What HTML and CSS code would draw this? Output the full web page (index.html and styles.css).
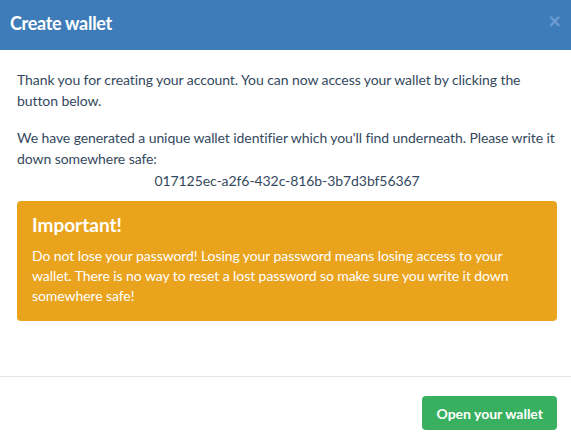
FILE: index.html
```html
<!DOCTYPE html>
<html lang="en">
<head>
    <meta charset="UTF-8">
    <meta name="viewport" content="width=device-width, initial-scale=1.0">
    <title>Create wallet</title>
    <link rel="stylesheet" href="styles.css">
</head>
<body>
    <div class="modal">
        <div class="modal-header">
            <h1>Create wallet</h1>
            <button class="close" type="button">&times;</button>
        </div>

        <div class="modal-body">
            <p>Thank you for creating your account. You can now access your wallet by clicking the button below.</p>
            <p class="tight">We have generated a unique wallet identifier which you'll find underneath. Please write it down somewhere safe:</p>
            <p class="wallet-id">017125ec-a2f6-432c-816b-3b7d3bf56367</p>

            <div class="warning">
                <h2>Important!</h2>
                <p>Do not lose your password! Losing your password means losing access to your wallet. There is no way to reset a lost password so make sure you write it down somewhere safe!</p>
            </div>
        </div>

        <div class="modal-footer">
            <button class="btn-open" type="button">Open your wallet</button>
        </div>
    </div>
</body>
</html>
```

FILE: styles.css
```css
body {
    font-family: Lato, "Open Sans", sans-serif;
    margin: 0;
    background-color: #fff;
    color: #34495e;
}

.modal {
    width: 571px;
    display: flex;
    flex-direction: column;
}

.modal-header {
    height: 50px;
    flex-shrink: 0;
    box-sizing: border-box;
    background-color: #3e7cb9;
    display: flex;
    align-items: center;
    justify-content: space-between;
    padding: 0 10px 4px;
}

.modal-header h1 {
    margin: 0;
    font-size: 18px;
    letter-spacing: -0.3px;
    font-weight: bold;
    color: #fff;
}

.close {
    border: none;
    background: none;
    padding: 0;
    margin-bottom: 4px;
    font-family: Lato, sans-serif;
    font-size: 22px;
    font-weight: bold;
    line-height: 1;
    color: #6d9dd0;
    cursor: pointer;
}

.modal-body {
    padding: 19px 14px 55px 17px;
    border-bottom: 1px solid #e5e5e5;
}

.modal-body p {
    margin: 0 0 16px;
    font-size: 14px;
    line-height: 21px;
    letter-spacing: -0.08px;
}

.modal-body .tight {
    margin-bottom: 1px;
}

.modal-body .wallet-id {
    text-align: center;
    margin-bottom: 10px;
}

.warning {
    background-color: #eaa31d;
    border-radius: 4px;
    padding: 12px 15px 15px;
    color: #fff;
}

.warning h2 {
    margin: 0 0 9px;
    font-size: 19px;
    line-height: 24px;
    font-weight: bold;
}

.modal-body .warning p {
    margin: 0;
    line-height: 20px;
}

.modal-footer {
    display: flex;
    justify-content: flex-end;
    padding: 19px 14px;
}

.btn-open {
    height: 34px;
    padding: 0 14px;
    border: none;
    border-radius: 4px;
    background-color: #38b060;
    color: #fff;
    font-family: Lato, sans-serif;
    font-size: 14px;
    font-weight: bold;
    cursor: pointer;
}
```
